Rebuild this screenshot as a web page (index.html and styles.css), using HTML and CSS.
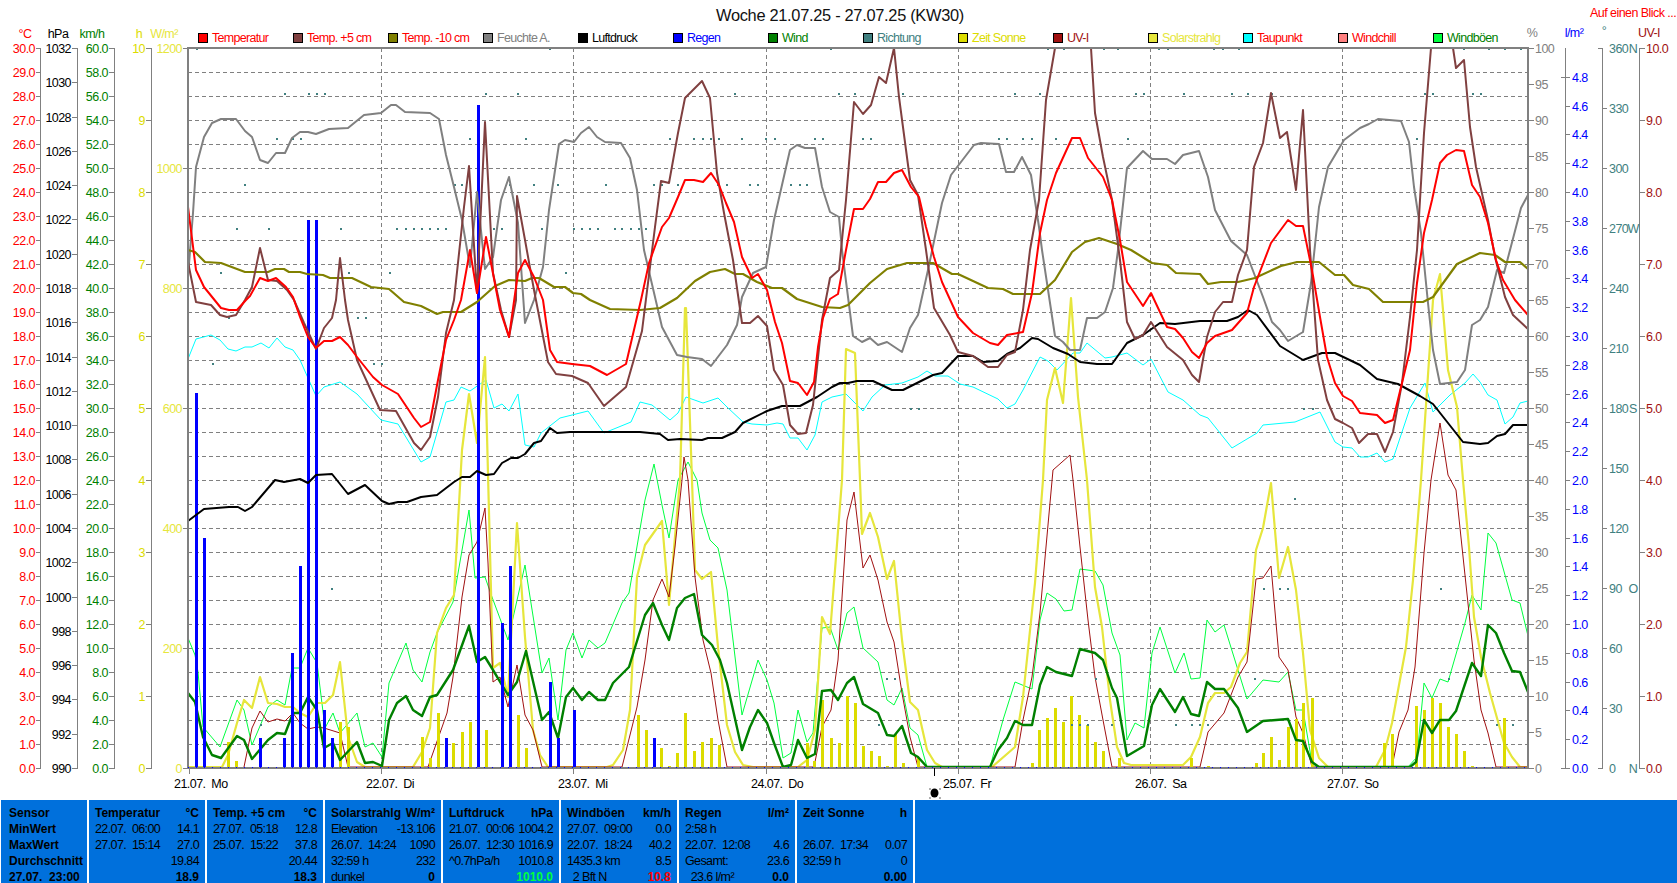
FILE: index.html
```html
<!DOCTYPE html>
<html>
<head>
  <meta charset="utf-8">
  <title>Woche 21.07.25 - 27.07.25 (KW30)</title>
  <link rel="stylesheet" href="styles.css">
</head>
<body>
<!-- chart is filled by chart.js -->
<svg id="chart" class="chart" width="1677" height="800" xmlns="http://www.w3.org/2000/svg"></svg>

<!-- summary table below the chart -->
<div class="stats">
  <div class="panel first">
    <div class="row"><b>Sensor</b></div>
    <div class="row"><b>MinWert</b></div>
    <div class="row"><b>MaxWert</b></div>
    <div class="row"><b>Durchschnitt</b></div>
    <div class="row"><b>27.07.  23:00</b></div>
  </div>
  <div class="panel">
    <div class="row"><b>Temperatur</b><b>°C</b></div>
    <div class="row"><span>22.07.  06:00</span><span>14.1</span></div>
    <div class="row"><span>27.07.  15:14</span><span>27.0</span></div>
    <div class="row"><span></span><span>19.84</span></div>
    <div class="row"><span></span><b>18.9</b></div>
  </div>
  <div class="panel">
    <div class="row"><b>Temp. +5 cm</b><b>°C</b></div>
    <div class="row"><span>27.07.  05:18</span><span>12.8</span></div>
    <div class="row"><span>25.07.  15:22</span><span>37.8</span></div>
    <div class="row"><span></span><span>20.44</span></div>
    <div class="row"><span></span><b>18.3</b></div>
  </div>
  <div class="panel">
    <div class="row"><b>Solarstrahlg</b><b>W/m²</b></div>
    <div class="row"><span>Elevation</span><span>-13.106</span></div>
    <div class="row"><span>26.07.  14:24</span><span>1090</span></div>
    <div class="row"><span>32:59 h</span><span>232</span></div>
    <div class="row"><span>dunkel</span><b>0</b></div>
  </div>
  <div class="panel">
    <div class="row"><b>Luftdruck</b><b>hPa</b></div>
    <div class="row"><span>21.07.  00:06</span><span>1004.2</span></div>
    <div class="row"><span>26.07.  12:30</span><span>1016.9</span></div>
    <div class="row"><span>^0.7hPa/h</span><span>1010.8</span></div>
    <div class="row"><span></span><b class="now-green">1010.0</b></div>
  </div>
  <div class="panel">
    <div class="row"><b>Windböen</b><b>km/h</b></div>
    <div class="row"><span>27.07.  09:00</span><span>0.0</span></div>
    <div class="row"><span>22.07.  18:24</span><span>40.2</span></div>
    <div class="row"><span>1435.3 km</span><span>8.5</span></div>
    <div class="row"><span>  2 Bft N</span><b class="now-red">10.8</b></div>
  </div>
  <div class="panel">
    <div class="row"><b>Regen</b><b>l/m²</b></div>
    <div class="row"><span>2:58 h</span><span></span></div>
    <div class="row"><span>22.07.  12:08</span><span>4.6</span></div>
    <div class="row"><span>Gesamt:</span><span>23.6</span></div>
    <div class="row"><span>  23.6 l/m²</span><b>0.0</b></div>
  </div>
  <div class="panel">
    <div class="row"><b>Zeit Sonne</b><b>h</b></div>
    <div class="row"><span></span><span></span></div>
    <div class="row"><span>26.07.  17:34</span><span>0.07</span></div>
    <div class="row"><span>32:59 h</span><span>0</span></div>
    <div class="row"><span></span><b>0.00</b></div>
  </div>
  <div class="panel rest"></div>
</div>

<script src="chart.js"></script>
</body>
</html>
```

FILE: styles.css
```css
html, body { margin: 0; padding: 0; background: #fff; }
body { width: 1677px; height: 883px; overflow: hidden; font-family: "Liberation Sans", Arial, sans-serif; }

/* chart */
.chart { display: block; }
.chart text { font-family: "Liberation Sans", Arial, sans-serif; font-size: 12.5px; letter-spacing: -0.55px; white-space: pre; }
.chart .title { font-size: 16.4px; letter-spacing: -0.3px; fill: #111; }
.chart .legend-text { letter-spacing: -0.7px; }
.chart line, .chart rect { shape-rendering: crispEdges; }

/* summary table */
.stats { display: flex; gap: 2px; height: 83px; padding-left: 1px; background: #fff; overflow: hidden; }
.panel { width: 116px; box-sizing: border-box; padding: 7px 6px 0 6px; background: #0070dc; color: #000; font-size: 12.5px; letter-spacing: -0.6px; }
.panel.first { width: 86px; padding-left: 8px; padding-right: 0; }
.panel.rest { flex: 1; }
.row { display: flex; justify-content: space-between; height: 16px; line-height: 12px; white-space: pre; }
.row:last-child { height: 12px; }
.row b { letter-spacing: 0; font-size: 12px; }
.now-green { color: #00ff40; }
.now-red { color: #ff0000; }
```

FILE: chart.js
```js
var svg = document.getElementById('chart');
var NS = 'http://www.w3.org/2000/svg';

var TOP = 48, BOTTOM = 768, LEFT = 188, RIGHT = 1528;
var GREY = '#808080', TEAL = '#408080', UV = '#a01010', SOLAR = '#e6e63c', SUN = '#dcdc00', GUST = '#00ff40', WIND = '#008000';

function el(name, attrs, text) {
  var node = document.createElementNS(NS, name);
  for (var k in attrs) node.setAttribute(k, attrs[k]);
  if (text !== undefined) node.textContent = text;
  svg.appendChild(node);
  return node;
}
function line(x1, y1, x2, y2, color, extra) {
  var a = { x1: x1, y1: y1, x2: x2, y2: y2, stroke: color };
  for (var k in extra) a[k] = extra[k];
  return el('line', a);
}
function label(x, y, str, color, anchor) {
  return el('text', { x: x, y: y + 4.5, fill: color, 'text-anchor': anchor || 'start' }, str);
}
function trace(points, color, width) {
  el('polyline', { points: points, fill: 'none', stroke: color, 'stroke-width': width, 'stroke-linejoin': 'round' });
}

// ---------- title
el('text', { x: 840, y: 21, fill: '#111', 'text-anchor': 'middle', 'class': 'title' }, 'Woche 21.07.25 - 27.07.25 (KW30)');
label(1590, 12, 'Auf einen Blick ...', '#ff0000');

// ---------- legend
var legend = [
  ['Temperatur', '#ff0000', '#ff0000'], ['Temp. +5 cm', '#804040', '#ff0000'], ['Temp. -10 cm', '#808000', '#ff0000'],
  ['Feuchte A.', GREY, GREY], ['Luftdruck', '#000000', '#000000'], ['Regen', '#0000ff', '#0000ff'],
  ['Wind', WIND, WIND], ['Richtung', TEAL, TEAL], ['Zeit Sonne', SUN, SUN], ['UV-I', UV, UV],
  ['Solarstrahlg', SOLAR, SOLAR], ['Taupunkt', '#00ffff', '#ff0000'], ['Windchill', '#ff8080', '#ff0000'], ['Windböen', GUST, WIND]
];
legend.forEach(function (item, i) {
  var x = Math.round(198 + i * 95);
  el('rect', { x: x + 0.5, y: 33.5, width: 9, height: 9, fill: item[1], stroke: '#000' });
  label(x + 14, 37, item[0], item[2]).setAttribute('class', 'legend-text');
});

// ---------- axis headers
label(25, 33, '°C', '#ff0000', 'middle');
label(58, 33, 'hPa', '#000', 'middle');
label(92, 33, 'km/h', WIND, 'middle');
label(139, 33, 'h', SUN, 'middle');
label(164, 33, 'W/m²', SOLAR, 'middle');
label(1532, 32, '%', GREY, 'middle');
label(1574, 32, 'l/m²', '#0000ff', 'middle');
label(1604, 30, '°', TEAL, 'middle');
label(1649, 32, 'UV-I', UV, 'middle');

// ---------- left axes
var i, y;
line(40.5, TOP, 40.5, BOTTOM + 1, GREY, { 'stroke-width': 1.5 });
line(77.5, TOP, 77.5, BOTTOM + 1, GREY, { 'stroke-width': 1.5 });
line(114.5, TOP, 114.5, BOTTOM + 1, GREY, { 'stroke-width': 1.5 });
line(151.5, TOP, 151.5, BOTTOM + 1, GREY, { 'stroke-width': 1.5 });

for (i = 0; i <= 30; i++) {
  y = BOTTOM - i * 24;
  line(36, y + 0.5, 41, y + 0.5, GREY);
  label(35, y, i.toFixed(1), '#ff0000', 'end');
  line(109, y + 0.5, 115, y + 0.5, GREY);
  label(108, y, (i * 2).toFixed(1), WIND, 'end');
}
for (i = 0; i <= 21; i++) {
  y = Math.round(BOTTOM - i * 720 / 21);
  line(72, y + 0.5, 78, y + 0.5, GREY);
  label(71, y, String(990 + i * 2), '#000', 'end');
}
for (i = 0; i <= 10; i++) {
  y = BOTTOM - i * 72;
  line(146, y + 0.5, 152, y + 0.5, GREY);
  label(145, y, String(i), SUN, 'end');
}
for (i = 0; i <= 6; i++) {
  y = BOTTOM - i * 120;
  line(183, y + 0.5, 188, y + 0.5, GREY);
  label(182, y, String(i * 200), SOLAR, 'end');
}

// ---------- right axes
line(1565.5, TOP, 1565.5, BOTTOM + 1, GREY, { 'stroke-width': 1.5 });
line(1602.5, TOP, 1602.5, BOTTOM + 1, GREY, { 'stroke-width': 1.5 });
line(1639.5, TOP, 1639.5, BOTTOM + 1, GREY, { 'stroke-width': 1.5 });

for (i = 0; i <= 20; i++) {
  y = BOTTOM - i * 36;
  line(1528, y + 0.5, 1534, y + 0.5, GREY);
  label(1535, y, String(i * 5), GREY);
}
for (i = 0; i <= 24; i++) {
  y = Math.round(BOTTOM - i * 28.8);
  line(i === 0 || i === 24 ? 1561 : 1565, y + 0.5, 1570, y + 0.5, GREY);
  label(1572, y, (i * 0.2).toFixed(1), '#0000ff');
}
var compass = { 0: 'N', 3: 'O', 6: 'S', 9: 'W', 12: 'N' };
for (i = 0; i <= 12; i++) {
  y = BOTTOM - i * 60;
  if (i === 0 || i === 12) line(1598, y + 0.5, 1603, y + 0.5, GREY);
  else line(1602, y + 0.5, 1607, y + 0.5, GREY);
  label(1609, y, String(i * 30), TEAL);
  if (compass[i]) label(1633, y, compass[i], TEAL, 'middle');
}
for (i = 0; i <= 10; i++) {
  y = BOTTOM - i * 72;
  line(1639, y + 0.5, 1645, y + 0.5, GREY);
  label(1646, y, i.toFixed(1), UV);
}

// ---------- grid
for (y = TOP + 24; y < BOTTOM; y += 24) {
  line(LEFT, y + 0.5, RIGHT, y + 0.5, GREY, { 'stroke-dasharray': '4 3' });
}
var days = [[189, '21.07.  Mo'], [381, '22.07.  Di'], [573, '23.07.  Mi'], [766, '24.07.  Do'], [958, '25.07.  Fr'], [1150, '26.07.  Sa'], [1342, '27.07.  So']];
days.forEach(function (d) {
  if (d[0] > 189) line(d[0] + 0.5, TOP, d[0] + 0.5, BOTTOM, GREY, { 'stroke-dasharray': '4 3' });
  line(d[0] + 0.5, BOTTOM, d[0] + 0.5, BOTTOM + 6, GREY);
  label(d[0] - 15, 783, d[1], '#000');
});

// ---------- data, back to front
var gust = '188,638 195,655 198,672 203,727 220,747 237,700 244,710 252,745 268,707 277,700 285,705 292,668 300,668 308,648 317,663 325,728 333,713 340,733 357,713 365,747 373,743 382,757 389,683 406,643 413,670 422,682 430,652 437,633 453,602 469,510 475,578 485,577 492,597 508,640 525,565 542,673 549,658 558,720 566,650 573,633 582,658 589,640 598,648 605,643 622,603 629,593 645,500 654,464 662,505 669,538 678,480 688,462 697,480 702,513 710,540 718,548 727,590 742,715 758,660 767,680 774,703 783,758 791,753 798,710 807,742 813,733 822,628 830,627 838,650 847,613 854,607 863,648 878,662 887,700 894,705 902,688 910,728 918,735 927,767 990,767 1003,720 1015,682 1032,689 1040,620 1047,593 1056,599 1064,611 1072,610 1080,569 1095,571 1103,585 1112,633 1120,655 1127,740 1135,723 1144,728 1152,653 1160,627 1175,673 1184,653 1191,679 1200,678 1207,620 1215,632 1224,625 1247,699 1263,680 1279,682 1288,672 1296,710 1303,710 1312,763 1317,767 1408,767 1417,757 1424,683 1432,698 1440,679 1448,682 1465,623 1472,595 1481,610 1488,533 1496,543 1512,600 1520,603 1528,636';
var dew = '188,359 196,339 211,335 220,340 228,349 236,351 245,347 252,347 261,343 269,348 277,338 285,347 293,350 300,360 308,378 316,396 324,387 340,382 357,394 381,420 398,424 421,462 430,457 446,402 454,400 461,387 470,391 486,380 494,408 502,404 509,411 518,394 525,445 534,447 541,433 560,418 588,411 604,433 631,422 640,402 652,405 670,420 678,413 686,397 703,403 718,398 727,407 743,422 752,424 767,425 777,423 783,424 790,438 798,438 807,450 815,435 822,402 832,397 846,394 863,411 872,397 885,385 902,383 918,377 927,371 935,376 948,376 960,384 973,387 998,399 1007,408 1015,404 1023,390 1040,357 1048,361 1057,370 1073,353 1080,353 1087,343 1105,358 1112,357 1127,353 1143,365 1151,359 1168,392 1183,400 1200,415 1208,418 1232,448 1257,433 1263,425 1295,422 1320,412 1335,442 1343,447 1352,448 1360,457 1368,457 1377,453 1385,462 1393,459 1410,408 1425,383 1433,412 1450,395 1465,383 1473,374 1480,382 1488,395 1497,400 1505,424 1513,417 1520,403 1528,401';
var solar = '188,767 222,767 228,755 237,723 244,700 252,708 260,677 268,703 277,704 285,707 293,707 300,713 308,717 317,703 325,703 333,695 340,662 348,737 357,762 365,767 413,767 422,752 430,728 437,633 446,608 454,595 462,450 469,394 477,443 485,357 493,668 500,663 508,697 517,523 525,637 533,730 540,755 548,767 607,767 613,765 623,750 630,710 637,577 645,545 662,521 669,605 680,480 685,308 686,308 692,480 695,570 702,579 711,572 718,647 727,725 735,752 743,765 753,767 798,767 807,760 815,730 822,617 830,634 842,480 846,349 855,353 860,480 862,534 870,513 878,537 887,579 894,561 902,640 910,702 918,710 927,750 935,763 942,767 992,767 1015,747 1023,697 1035,583 1043,480 1047,400 1055,368 1063,403 1071,298 1078,397 1087,480 1095,587 1102,627 1110,700 1117,747 1124,763 1131,765 1183,765 1191,757 1200,737 1208,703 1215,693 1224,693 1231,687 1240,663 1247,652 1256,550 1263,528 1271,483 1279,578 1288,547 1296,590 1303,653 1310,730 1319,758 1328,767 1376,767 1385,750 1392,723 1406,647 1413,580 1421,480 1433,300 1440,274 1448,370 1457,407 1463,480 1469,547 1474,617 1481,657 1490,693 1504,743 1512,757 1520,767 1528,767';
var uv = '244,767 252,728 260,711 268,722 277,719 285,721 293,713 300,723 308,729 317,727 324,728 340,733 348,767 428,767 447,713 453,677 462,597 469,555 477,542 485,508 488,563 493,682 500,677 508,707 517,665 525,715 533,730 542,767 622,767 637,707 645,660 653,600 662,579 669,597 675,547 682,480 684,457 688,480 695,577 703,640 711,673 718,720 727,767 814,767 822,727 831,710 838,660 847,520 854,492 863,568 870,555 878,580 887,622 894,642 902,693 910,737 918,767 1015,767 1023,720 1032,677 1040,613 1053,470 1070,455 1073,480 1080,547 1088,620 1095,677 1103,720 1112,767 1200,767 1208,732 1224,713 1238,677 1247,662 1256,579 1263,578 1271,566 1279,657 1288,670 1296,717 1303,733 1312,767 1392,767 1399,732 1408,710 1415,667 1424,553 1431,480 1440,423 1448,475 1456,490 1462,547 1474,660 1481,710 1488,733 1496,767 1528,767';
var wind = '188,693 195,702 203,737 212,755 221,758 237,736 244,740 252,759 268,740 277,733 285,734 293,713 300,713 308,697 317,710 324,748 333,743 340,760 357,742 365,763 373,762 382,766 389,720 397,703 406,696 413,710 422,716 430,697 437,695 453,670 469,626 477,662 485,657 493,670 508,695 517,682 526,651 542,720 549,712 558,738 566,697 573,688 582,700 589,692 598,700 605,700 613,683 629,667 645,615 653,603 662,625 669,640 677,608 685,598 694,594 702,635 712,645 720,660 727,683 742,750 750,727 758,710 767,723 774,743 783,767 791,765 798,740 807,758 815,754 822,691 831,690 838,700 847,683 854,677 863,704 878,713 887,735 894,736 902,726 911,753 918,757 927,767 990,767 998,750 1007,738 1015,721 1023,725 1032,725 1040,685 1047,667 1056,672 1072,676 1080,649 1095,653 1103,660 1112,688 1117,698 1127,756 1144,746 1152,705 1160,689 1175,712 1183,697 1191,714 1199,716 1207,682 1215,689 1224,689 1238,708 1247,732 1263,721 1288,719 1296,740 1303,741 1312,762 1319,767 1410,767 1416,762 1424,720 1432,733 1440,720 1449,720 1456,711 1472,663 1481,676 1488,625 1496,633 1504,653 1512,671 1520,672 1528,692';
var pressure = '188,521 204,509 229,507 238,507 245,511 252,507 275,480 284,482 300,479 308,483 316,475 332,474 348,494 365,485 382,501 389,504 398,502 407,502 421,497 437,495 454,482 462,477 470,477 477,471 486,475 494,474 502,463 511,458 518,458 525,454 534,443 541,441 550,428 557,433 570,432 600,432 640,432 660,434 668,440 680,439 702,440 708,438 722,438 735,432 743,423 767,411 782,406 800,406 817,397 832,387 840,383 848,383 857,381 873,381 892,390 903,390 933,375 942,373 958,356 973,356 983,362 998,361 1007,354 1020,348 1032,338 1038,339 1053,348 1068,354 1080,362 1097,364 1112,364 1127,343 1143,335 1160,323 1175,324 1200,321 1227,321 1238,317 1248,310 1257,315 1280,346 1303,360 1322,353 1335,353 1360,365 1377,379 1398,384 1420,396 1433,404 1463,442 1480,444 1488,443 1497,436 1505,434 1513,425 1528,425';
var humidity = '188,277 193,213 196,167 204,137 212,123 221,119 236,119 245,131 252,137 260,160 268,163 276,153 285,153 292,138 300,132 308,132 316,134 329,129 348,128 364,115 381,113 391,105 396,105 405,112 430,113 439,119 446,155 454,187 462,220 470,267 477,192 485,269 493,257 501,200 509,177 518,223 525,323 534,300 543,267 549,210 559,144 565,140 574,142 581,133 589,127 597,137 605,142 621,143 630,158 637,190 644,250 662,327 677,355 687,357 702,359 711,366 727,345 737,325 742,297 753,273 766,267 774,220 790,150 797,145 805,148 815,148 822,187 830,212 839,217 842,250 853,336 862,342 870,338 878,345 887,342 902,352 910,328 918,315 928,270 942,203 951,175 974,145 981,143 999,144 1006,172 1014,172 1022,157 1031,175 1039,227 1042,250 1055,336 1063,342 1070,350 1080,350 1087,318 1097,318 1105,312 1113,288 1118,250 1127,168 1143,151 1152,159 1167,159 1175,164 1183,155 1199,151 1208,177 1215,210 1231,241 1247,255 1263,297 1272,322 1280,330 1288,341 1303,332 1311,283 1319,207 1328,167 1344,140 1360,128 1369,124 1378,119 1401,121 1409,142 1414,187 1421,233 1428,303 1433,350 1440,384 1457,382 1465,370 1472,325 1480,320 1488,307 1497,270 1504,273 1521,208 1528,195';
var tempMinus10 = '188,250 195,252 205,262 221,263 245,272 268,272 275,269 284,269 289,272 300,272 307,274 323,275 330,278 352,278 371,287 389,289 404,302 421,306 437,314 443,312 461,312 477,302 495,286 509,280 525,281 532,278 539,278 554,287 565,287 573,293 581,294 590,300 610,309 640,310 660,308 677,298 695,281 710,272 725,269 735,274 743,274 757,282 772,288 782,288 797,299 822,307 840,308 848,305 870,283 887,269 907,263 933,263 952,274 958,274 988,288 1003,289 1013,294 1040,294 1055,280 1072,252 1085,242 1099,238 1117,244 1131,250 1152,263 1167,265 1176,273 1200,274 1208,284 1221,282 1238,282 1255,278 1281,266 1297,262 1319,262 1335,275 1344,275 1353,285 1369,289 1383,302 1407,302 1423,302 1433,297 1457,264 1480,253 1495,255 1505,262 1520,262 1528,269';
var tempPlus5 = '188,262 196,302 211,305 220,315 227,317 236,315 245,300 252,287 260,248 268,280 277,281 287,290 294,300 304,323 316,349 324,328 332,318 336,300 340,258 345,300 348,320 357,360 380,410 396,411 414,443 421,450 430,437 438,397 446,333 454,300 464,207 469,166 477,293 485,122 493,273 501,310 509,337 516,300 517,196 525,240 534,290 548,362 556,374 572,376 588,383 604,406 626,387 642,331 655,227 661,181 669,183 678,133 685,98 702,81 710,98 717,173 724,213 733,260 742,323 750,323 758,316 767,326 774,370 783,385 790,425 798,434 806,433 813,405 822,320 830,278 839,270 846,200 854,102 863,114 871,105 879,77 886,83 894,48 899,97 910,180 918,195 926,250 934,308 950,335 958,352 973,356 988,367 998,367 1007,355 1015,352 1023,310 1030,250 1039,200 1046,100 1055,48';
var tempPlus5b = '1091,48 1095,113 1103,157 1112,200 1120,260 1127,322 1135,339 1143,335 1151,322 1167,347 1183,360 1192,375 1199,382 1207,337 1215,312 1223,302 1232,302 1238,275 1247,250 1254,167 1263,143 1271,93 1280,138 1287,132 1296,190 1303,110 1310,250 1318,360 1327,400 1335,419 1343,423 1352,428 1359,443 1368,434 1377,434 1385,452 1393,432 1402,383 1410,317 1417,250 1424,133 1431,48';
var tempPlus5c = '1453,48 1456,68 1464,60 1470,127 1476,167 1488,220 1495,257 1505,297 1513,315 1528,329';
var temp = '188,207 196,270 204,287 221,308 229,310 237,310 246,300 250,296 260,278 268,281 276,278 286,287 293,297 300,317 308,337 316,348 324,341 332,341 340,337 348,345 357,357 373,377 382,385 398,394 414,418 421,427 430,422 438,380 446,340 454,320 461,300 470,250 477,293 486,237 500,310 509,337 518,273 525,260 534,277 543,300 550,350 557,362 572,364 590,366 607,375 626,364 641,300 649,263 662,227 669,218 678,197 685,180 694,180 703,182 711,173 719,185 726,203 734,222 742,257 752,278 758,274 767,290 775,322 782,343 790,381 798,383 807,395 814,382 818,347 823,318 830,299 838,294 846,250 854,209 863,209 870,199 878,182 886,182 894,173 902,170 911,187 919,197 926,227 934,257 942,282 958,317 973,333 990,343 998,345 1007,335 1023,332 1032,293 1040,233 1047,200 1056,173 1072,138 1080,138 1088,158 1103,177 1112,200 1120,240 1127,282 1143,306 1151,293 1167,327 1175,329 1183,338 1192,352 1199,358 1207,343 1215,336 1232,330 1247,313 1254,287 1271,243 1288,220 1296,226 1303,226 1312,270 1320,317 1327,357 1335,383 1343,396 1352,401 1360,413 1377,415 1385,423 1393,420 1402,383 1410,350 1417,283 1424,233 1432,200 1440,163 1447,155 1456,150 1464,151 1472,185 1480,197 1488,223 1496,260 1503,280 1515,300 1528,315';

var sunBars = [[228,742],[236,761],[340,722],[348,727],[422,737],[430,758],[438,713],[453,743],[462,732],[470,722],[486,730],[518,715],[526,748],[638,715],[646,730],[661,748],[669,766],[677,753],[685,713],[694,751],[702,742],[711,738],[719,745],[807,743],[814,761],[822,700],[831,738],[839,743],[847,696],[855,703],[863,746],[871,751],[879,756],[887,766],[895,734],[903,763],[918,758],[1032,763],[1039,730],[1047,718],[1055,708],[1063,722],[1071,696],[1079,715],[1087,725],[1095,742],[1103,751],[1119,758],[1191,758],[1208,766],[1256,763],[1263,753],[1271,737],[1279,760],[1288,727],[1296,719],[1303,703],[1312,698],[1384,743],[1392,734],[1416,706],[1424,710],[1432,698],[1440,703],[1448,727],[1456,734],[1464,751],[1472,766],[1504,718]];
var rainBars = [[196,393],[204,538],[260,738],[284,738],[292,653],[300,566],[308,220],[316,220],[324,710],[332,738],[446,738],[478,105],[502,623],[510,566],[550,682],[558,738],[574,710],[654,738]];
var dirDots = {
  48: [196,549,830,1047,1063,1103,1117,1158,1167,1213,1222,1238,1463,1488,1504,1520],
  93: [284,308,316,324,485,517,734,838,854,902,1014,1039,1135,1143,1183,1231,1247,1271,1424,1432,1472,1480],
  138: [276,292,300,469,525,669,693,702,710,718,741,765,774,814,822,862,870,998,1006,1022,1031,1055,1127,1416],
  184: [244,454,461,509,533,557,605,653,661,677,717,726,749,757,790,799,806],
  228: [236,268,340,396,405,413,421,429,437,445,493,501,541,573,581,589,597,614,621,630,638,645],
  272: [220,348,389,565],
  317: [228,357,365],
  363: [212,373,381],
  408: [910,918,1303,1312],
  498: [1294],
  588: [331,1263,1279,1287,1440],
  678: [886,894,1095,1254,1448],
  724: [260,878,1071,1079,1087,1111,1175,1191,1199,1207,1496,1512]
};

trace(gust, GUST, 1);
trace(dew, '#00ffff', 1);
trace(solar, SOLAR, 2.2);
trace(uv, UV, 1);
sunBars.forEach(function (b) { el('rect', { x: b[0] - 1, y: b[1], width: 3, height: BOTTOM - b[1], fill: SUN }); });
for (y in dirDots) {
  dirDots[y].forEach(function (x) { el('rect', { x: x, y: +y, width: 2, height: 2, fill: TEAL }); });
}
trace(wind, WIND, 2.4);
rainBars.forEach(function (b) { el('rect', { x: b[0] - 1, y: b[1], width: 3, height: BOTTOM - b[1], fill: '#0000ff' }); });
trace(pressure, '#000000', 2);
trace(humidity, GREY, 2);
trace(tempMinus10, '#808000', 2.2);
trace(tempPlus5, '#804040', 2);
trace(tempPlus5b, '#804040', 2);
trace(tempPlus5c, '#804040', 2);
trace(temp, '#ff0000', 2);

// ---------- frame
el('rect', { x: LEFT, y: TOP - 1, width: RIGHT - LEFT, height: 2, fill: GREY });
el('rect', { x: LEFT - 1, y: TOP - 1, width: 2, height: BOTTOM - TOP + 2, fill: GREY });
el('rect', { x: LEFT, y: BOTTOM - 1, width: RIGHT - LEFT, height: 2, fill: GREY });
el('rect', { x: RIGHT - 1, y: TOP - 1, width: 2, height: BOTTOM - TOP + 2, fill: GREY });
line(LEFT, BOTTOM - 0.5, RIGHT, BOTTOM - 0.5, '#0000ff', { 'stroke-dasharray': '1 7' });

// ---------- moon marker under the axis
line(934.5, BOTTOM, 934.5, 776, '#000');
el('ellipse', { cx: 934.5, cy: 793, rx: 4, ry: 4.5, fill: '#000' });
[[929,788],[939,788],[929,797],[939,797]].forEach(function (p) {
  el('rect', { x: p[0], y: p[1], width: 2, height: 2, fill: '#b0b0b0' });
});
```
